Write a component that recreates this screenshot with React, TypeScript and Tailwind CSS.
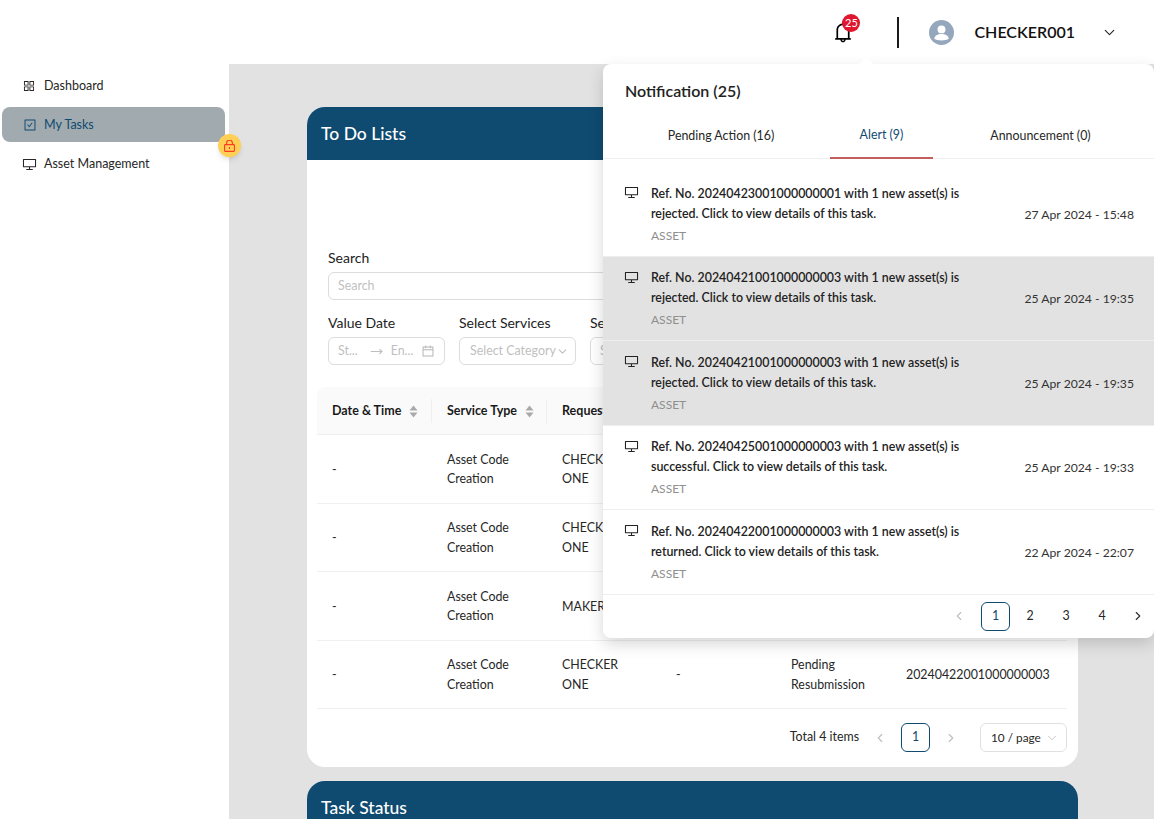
import { ChevronDown, ChevronLeft, ChevronRight, MoveRight } from 'lucide-react';
import { AiOutlineAppstore, AiOutlineBell, AiOutlineCalendar, AiOutlineCheckSquare, AiOutlineDesktop } from 'react-icons/ai';

const rows = [
  { id: 1, requester: ['CHECKER', 'ONE'] },
  { id: 2, requester: ['CHECKER', 'ONE'] },
  { id: 3, requester: ['MAKER'] },
  { id: 4, requester: ['CHECKER', 'ONE'], remark: '-', status: ['Pending', 'Resubmission'], ref: '20240422001000000003' },
];

const notifications = [
  { ref: '20240423001000000001', result: 'rejected', date: '27 Apr 2024 - 15:48', read: false },
  { ref: '20240421001000000003', result: 'rejected', date: '25 Apr 2024 - 19:35', read: true },
  { ref: '20240421001000000003', result: 'rejected', date: '25 Apr 2024 - 19:35', read: true },
  { ref: '20240425001000000003', result: 'successful', date: '25 Apr 2024 - 19:33', read: false },
  { ref: '20240422001000000003', result: 'returned', date: '22 Apr 2024 - 22:07', read: false },
];

function SortIcon() {
  return (
    <svg width="9" height="13" viewBox="0 0 9 13" className="shrink-0 fill-[#a9a9a9]">
      <path d="M4.5 0.5 8.5 5.5H0.5Z" />
      <path d="M4.5 12.5 0.5 7.5H8.5Z" />
    </svg>
  );
}

function Header() {
  return (
    <header className="flex h-16 items-center justify-end bg-white">
      <div className="relative mr-[42px] h-6 w-6">
        <AiOutlineBell size={24} className="text-black" />
        <span className="absolute left-[11px] top-[-6px] flex h-[18px] w-[18px] items-center justify-center rounded-full bg-[#e0162f] text-[11px] text-white">
          25
        </span>
      </div>
      <div className="mr-[30px] h-[31px] w-[2px] bg-[#1a1a1a]" />
      <svg width="25" height="25" viewBox="0 0 24 24" className="mr-[20px]">
        <circle cx="12" cy="12" r="12" fill="#94a7bc" />
        <circle cx="12" cy="9" r="3.8" fill="#fff" />
        <path d="M5 18c.4-3.2 3.2-4.6 7-4.6s6.6 1.4 7 4.6c-1.6 1-4 1.6-7 1.6s-5.4-.6-7-1.6Z" fill="#fff" />
      </svg>
      <span className="mr-[26px] text-[16px] font-semibold text-[#111]">CHECKER001</span>
      <ChevronDown size={17} strokeWidth={1.5} className="mr-[36px] text-[#222]" />
    </header>
  );
}

function Sidebar() {
  return (
    <aside className="relative w-[229px] shrink-0 bg-white pt-[2px] text-[12.5px] text-[#262626]">
      <div className="flex h-[40px] items-center gap-[8px] pl-[22px]">
        <AiOutlineAppstore size={14} />
        <span>Dashboard</span>
      </div>
      <div className="mx-[2px] mt-[1px] flex h-[35px] w-[223px] items-center gap-[7px] rounded-lg bg-[#a1aaaf] pl-[21px] pt-[1px] text-[#0f4a70]">
        <AiOutlineCheckSquare size={14} />
        <span>My Tasks</span>
      </div>
      <div className="mt-[2px] flex h-[40px] items-center gap-[7px] pl-[22px]">
        <AiOutlineDesktop size={15} />
        <span>Asset Management</span>
      </div>
      <div className="absolute left-[218px] top-[70px] flex h-[23px] w-[23px] items-center justify-center rounded-full bg-[#ffd056] shadow-md">
        <svg width="11" height="12" viewBox="0 0 11 12" fill="none" stroke="#fb3b24" strokeWidth="1.1">
          <path d="M2.6 4.6V3a2.9 2.9 0 0 1 5.8 0v1.6" />
          <rect x="0.6" y="4.6" width="9.8" height="6.8" rx="0.6" />
          <path d="M5.5 7v2" />
        </svg>
      </div>
    </aside>
  );
}

function Filters() {
  const placeholder = 'text-[12.4px] text-[#bfbfbf]';
  const box = 'flex h-[28px] w-[117px] items-center rounded-md border border-[#dcdcdc] bg-white pl-[9px] pr-[4px]';
  return (
    <div className="px-[21px] text-[14px] text-[#222]">
      <div className="leading-[20px]">Search</div>
      <div className="mt-[4px] flex h-[28px] items-center rounded-md border border-[#dcdcdc] px-[9px]">
        <span className={placeholder}>Search</span>
      </div>
      <div className="mt-[13px] flex gap-[14px]">
        <div>
          <div className="leading-[20px]">Value Date</div>
          <div className={`${box} mt-[4px] pr-[9px]`}>
            <span className={placeholder}>St...</span>
            <MoveRight size={13} className="ml-[12px] text-[#bfbfbf]" />
            <span className={`${placeholder} ml-[8px]`}>En...</span>
            <AiOutlineCalendar size={14} className="ml-auto text-[#b5b5b5]" />
          </div>
        </div>
        <div>
          <div className="leading-[20px]">Select Services</div>
          <div className={`${box} mt-[4px]`}>
            <span className={`${placeholder} ml-[1px] whitespace-nowrap`}>Select Category</span>
            <ChevronDown size={13} className="shrink-0 text-[#bfbfbf]" />
          </div>
        </div>
        <div>
          <div className="leading-[20px]">Select Status</div>
          <div className={`${box} mt-[4px]`}>
            <span className={placeholder}>Select</span>
          </div>
        </div>
      </div>
    </div>
  );
}

function TodoTable() {
  const grid = 'grid grid-cols-[114px_115px_115px_114px_115px_176px]';
  return (
    <div className="ml-[10px] mr-[11px] mt-[22px] text-[12.4px] text-[#262626]">
      <div className={`${grid} h-[48px] items-center rounded-t-lg border-b border-[#f0f0f0] bg-[#fafafa] pt-[1px] text-[12.5px] font-bold text-[#1a1a1a]`}>
        {['Date & Time', 'Service Type', 'Requester'].map((title, i) => (
          <div key={title} className={`flex h-[24px] items-center gap-[8px] pl-[15px] ${i > 0 ? 'border-l border-[#efefef]' : ''}`}>
            <span className="whitespace-nowrap">{title}</span>
            {i < 2 && <SortIcon />}
          </div>
        ))}
      </div>
      {rows.map((row) => (
        <div key={row.id} className={`${grid} h-[68.5px] items-center border-b border-[#f0f0f0] pt-[1px] leading-[19.5px]`}>
          <div className="pl-[15px]">-</div>
          <div className="pl-[16px]">Asset Code<br />Creation</div>
          <div className="pl-[16px]">
            {row.requester.map((part) => (
              <div key={part}>{part}</div>
            ))}
          </div>
          <div className="pl-[15px]">{row.remark}</div>
          <div className="pl-[16px]">
            {row.status?.map((part) => (
              <div key={part}>{part}</div>
            ))}
          </div>
          <div className="pl-[16px]">{row.ref}</div>
        </div>
      ))}
      <div className="mt-[14px] flex items-center justify-end pb-[15px]">
        <span className="mr-[14px]">Total 4 items</span>
        <ChevronLeft size={14} className="mr-[14px] text-[#bfbfbf]" />
        <span className="mr-[14px] flex h-[29px] w-[29px] items-center justify-center rounded-md border border-[#0f4a70] text-[#0f4a70]">1</span>
        <ChevronRight size={14} className="mr-[22px] text-[#bfbfbf]" />
        <div className="flex h-[29px] w-[87px] items-center justify-between rounded-md border border-[#e0e0e0] pl-[10px] pr-[7px] text-[11.8px]">
          <span>10 / page</span>
          <ChevronDown size={14} strokeWidth={1.5} className="text-[#bfbfbf]" />
        </div>
      </div>
    </div>
  );
}

function NotificationPanel() {
  return (
    <div className="absolute left-[603px] top-[64px] z-10 w-[551px] rounded-lg bg-white shadow-[0_6px_16px_rgba(0,0,0,0.16)]">
      <div className="absolute left-[258px] top-[-5px] h-[10px] w-[10px] rotate-45 bg-white" />
      <div className="px-[22px] pt-[17px] text-[16px] font-semibold leading-[20px] text-[#222]">Notification (25)</div>
      <div className="mt-[13px] flex h-[45px] border-b border-[#f0f0f0] text-[12.4px] text-[#262626]">
        <div className="flex w-[235px] items-center justify-center pl-[1px]">Pending Action (16)</div>
        <div className="mb-[-1px] ml-[-8px] flex w-[103px] items-center justify-center border-b-[2px] border-[#c25e5e] text-[#0f4a70]">Alert (9)</div>
        <div className="flex flex-1 items-center justify-center pr-[6px]">Announcement (0)</div>
      </div>
      <div className="h-[13px]" />
      {notifications.map((item, i) => (
        <div
          key={i}
          className={`flex h-[84.5px] items-center border-b border-[#eeeeee] pl-[21px] pr-[20px] pt-[2px] ${item.read ? 'bg-[#e2e2e2]' : 'bg-white'}`}
        >
          <AiOutlineDesktop size={15} className="mb-[44px] mr-[12px] shrink-0 text-[#222]" />
          <div className="w-[340px] text-[12.4px] font-semibold leading-[20px] text-[#222]">
            <div>Ref. No. {item.ref} with 1 new asset(s) is</div>
            <div>{item.result}. Click to view details of this task.</div>
            <div className="mt-[2px] text-[12px] font-normal text-[#8f8f8f]">ASSET</div>
          </div>
          <div className="ml-auto whitespace-nowrap text-[12.2px] text-[#333]">{item.date}</div>
        </div>
      ))}
      <div className="flex h-[43.5px] items-center justify-end pr-[9px] text-[12.4px] text-[#262626]">
        <ChevronLeft size={14} className="mr-[15px] text-[#bfbfbf]" />
        <span className="mr-[2px] flex h-[29px] w-[29px] items-center justify-center rounded-md border border-[#0f4a70] text-[#0f4a70]">1</span>
        <span className="flex h-[29px] w-[36px] items-center justify-center">2</span>
        <span className="flex h-[29px] w-[36px] items-center justify-center">3</span>
        <span className="flex h-[29px] w-[36px] items-center justify-center">4</span>
        <ChevronRight size={14} className="ml-[11px] text-[#333]" />
      </div>
    </div>
  );
}

export default function App() {
  return (
    <div className="relative h-[819px] overflow-hidden bg-[#e2e2e2] font-['Lato',sans-serif]">
      <Header />
      <div className="flex h-[755px]">
        <Sidebar />
        <main className="flex-1 pl-[78px] pr-[76px] pt-[43px]">
          <section className="w-[771px] overflow-hidden rounded-[18px] bg-white">
            <div className="flex h-[53px] items-center bg-[#0f4a70] pl-[14px] pt-[2px] text-[17.5px] font-medium text-white">To Do Lists</div>
            <div className="pt-[88px]">
              <Filters />
              <TodoTable />
            </div>
          </section>
          <section className="mt-[14px] w-[771px] overflow-hidden rounded-t-[18px] bg-white">
            <div className="flex h-[53px] items-center bg-[#0f4a70] pl-[14px] pt-[1px] text-[17.5px] font-medium text-white">Task Status</div>
          </section>
        </main>
      </div>
      <NotificationPanel />
    </div>
  );
}
